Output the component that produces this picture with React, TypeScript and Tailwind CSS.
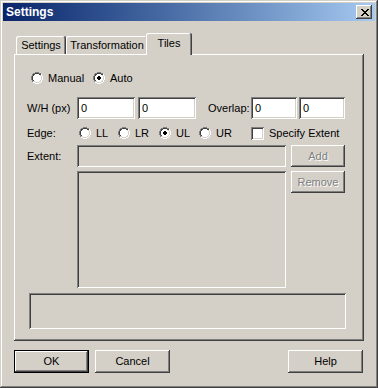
import React from "react";

// classic 3D edges
const RAISED =
  "shadow-[inset_-1px_-1px_0_#404040,inset_1px_1px_0_#ffffff,inset_-2px_-2px_0_#808080,inset_2px_2px_0_#d4d0c8]";
const SUNKEN =
  "shadow-[inset_1px_1px_0_#808080,inset_-1px_-1px_0_#ffffff,inset_2px_2px_0_#404040,inset_-2px_-2px_0_#d4d0c8]";

const RADIO = [
  "....GGGG....",
  "..GGDDDDGG..",
  ".GDDwwwwDDW.",
  ".GDwwwwwwLW.",
  "GDwwwwwwwwLW",
  "GDwwwwwwwwLW",
  "GDwwwwwwwwLW",
  "GDwwwwwwwwLW",
  ".GDwwwwwwLW.",
  ".GLLwwwwLLW.",
  "..WWLLLLWW..",
  "....WWWW....",
];

const RADIO_ON = [
  "....GGGG....",
  "..GGDDDDGG..",
  ".GDDwwwwDDW.",
  ".GDwwwwwwLW.",
  "GDwwwKKwwwLW",
  "GDwwKKKKwwLW",
  "GDwwKKKKwwLW",
  "GDwwwKKwwwLW",
  ".GDwwwwwwLW.",
  ".GLLwwwwLLW.",
  "..WWLLLLWW..",
  "....WWWW....",
];

const CLOSE_X = [
  "XX....XX",
  ".XX..XX.",
  "..XXXX..",
  "...XX...",
  "..XXXX..",
  ".XX..XX.",
  "XX....XX",
];

const COLORS: Record<string, string> = {
  G: "#808080",
  D: "#404040",
  W: "#ffffff",
  L: "#d4d0c8",
  w: "#ffffff",
  K: "#000000",
  X: "#000000",
};

function Pixels({ rows }: { rows: string[] }) {
  const w = rows[0].length;
  const h = rows.length;
  return (
    <svg width={w} height={h} viewBox={`0 0 ${w} ${h}`} shapeRendering="crispEdges" className="shrink-0">
      {rows.flatMap((row, y) =>
        [...row].map((c, x) =>
          COLORS[c] ? <rect key={`${x}-${y}`} x={x} y={y} width={1} height={1} fill={COLORS[c]} /> : null
        )
      )}
    </svg>
  );
}

function Radio({ label, checked, className }: { label: string; checked?: boolean; className: string }) {
  return (
    <div className={`flex items-center gap-[5px] ${className}`}>
      <Pixels rows={checked ? RADIO_ON : RADIO} />
      <span className="leading-none">{label}</span>
    </div>
  );
}

function Edit({ value, className }: { value?: string; className: string }) {
  return (
    <div className={`h-[22px] bg-white flex items-center pl-[4px] ${SUNKEN} ${className}`}>
      <span className="leading-none">{value}</span>
    </div>
  );
}

function Button({
  label,
  disabled,
  isDefault,
  className,
}: {
  label: string;
  disabled?: boolean;
  isDefault?: boolean;
  className: string;
}) {
  return (
    <div
      className={`flex items-center justify-center bg-[#d4d0c8] ${RAISED} ${
        isDefault ? "border border-black" : ""
      } ${className}`}
    >
      <span
        className={`leading-none ${
          disabled ? "text-[#808080] [text-shadow:1px_1px_0_#ffffff]" : "text-black"
        }`}
      >
        {label}
      </span>
    </div>
  );
}

const TAB_EDGE =
  "shadow-[inset_-1px_0_0_#404040,inset_1px_1px_0_#ffffff,inset_-2px_0_0_#808080] rounded-t-[2px]";

export default function App() {
  return (
    <div className="w-[378px] h-[388px] bg-[#d4d0c8] p-[3px] flex flex-col text-[11px] text-black [font-family:'Liberation_Sans',Arial,sans-serif] shadow-[inset_-1px_-1px_0_#404040,inset_1px_1px_0_#d4d0c8,inset_-2px_-2px_0_#808080,inset_2px_2px_0_#ffffff]">
      {/* Title bar */}
      <div className="h-[18px] flex items-center justify-between pl-[3px] pr-[3px] bg-linear-to-r from-[#0a246a] to-[#a6caf0]">
        <span className="text-white font-bold text-[12px] leading-none">Settings</span>
        <div className={`w-[16px] h-[14px] bg-[#d4d0c8] flex items-center justify-center pl-px ${RAISED}`}>
          <Pixels rows={CLOSE_X} />
        </div>
      </div>

      {/* Tabs */}
      <div className="flex items-end h-[21px] mt-[12px] pl-[13px]">
        <div className={`w-[50px] h-[18px] flex items-center justify-center pt-px ${TAB_EDGE}`}>Settings</div>
        <div className={`w-[82px] h-[18px] flex items-center justify-center pt-px ${TAB_EDGE}`}>Transformation</div>
        <div
          className={`relative z-10 -ml-[2px] -mb-px w-[46px] h-[22px] bg-[#d4d0c8] flex items-center justify-center pb-[2px] ${TAB_EDGE}`}
        >
          Tiles
        </div>
      </div>

      {/* Tab page */}
      <div className="ml-[11px] w-[350px] h-[287px] flex flex-col shadow-[inset_-1px_-1px_0_#404040,inset_1px_1px_0_#ffffff,inset_-2px_-2px_0_#808080]">
        <div className="flex items-center h-[12px] mt-[18px] pl-[17px]">
          <Radio label="Manual" className="w-[62px]" />
          <Radio label="Auto" checked className="w-[60px]" />
        </div>

        <div className="flex items-center h-[22px] mt-[13px] pl-[13px]">
          <span className="w-[50px] leading-none">W/H (px)</span>
          <Edit value="0" className="w-[58px]" />
          <Edit value="0" className="w-[58px] ml-[3px]" />
          <span className="w-[43px] ml-[12px] leading-none">Overlap:</span>
          <Edit value="0" className="w-[46px]" />
          <Edit value="0" className="w-[46px] ml-[2px]" />
        </div>

        <div className="flex items-center h-[14px] mt-[7px] pl-[13px]">
          <span className="w-[52px] leading-none">Edge:</span>
          <Radio label="LL" className="w-[39px]" />
          <Radio label="LR" className="w-[41px]" />
          <Radio label="UL" checked className="w-[40px]" />
          <Radio label="UR" className="w-[52px]" />
          <div className="flex items-center gap-[5px]">
            <div className={`w-[13px] h-[13px] bg-white ${SUNKEN}`} />
            <span className="leading-none">Specify Extent</span>
          </div>
        </div>

        <div className="flex items-center h-[22px] mt-[5px] pl-[13px]">
          <span className="w-[50px] leading-none">Extent:</span>
          <div className={`w-[209px] h-[22px] bg-[#d4d0c8] ${SUNKEN}`} />
          <Button label="Add" disabled className="w-[54px] h-[22px] ml-[5px]" />
        </div>

        <div className="flex items-start mt-[4px] pl-[63px]">
          <div className={`w-[209px] h-[117px] bg-[#d4d0c8] ${SUNKEN}`} />
          <Button label="Remove" disabled className="w-[54px] h-[22px] ml-[5px]" />
        </div>

        <div className="flex mt-[5px] pl-[15px]">
          <div className={`w-[317px] h-[36px] bg-[#d4d0c8] ${SUNKEN}`} />
        </div>
      </div>

      {/* Dialog buttons */}
      <div className="flex mt-[9px] pl-[11px] pr-[12px]">
        <Button label="OK" isDefault className="w-[75px] h-[23px]" />
        <Button label="Cancel" className="w-[75px] h-[23px] ml-[6px]" />
        <Button label="Help" className="w-[75px] h-[23px] ml-auto" />
      </div>
    </div>
  );
}
